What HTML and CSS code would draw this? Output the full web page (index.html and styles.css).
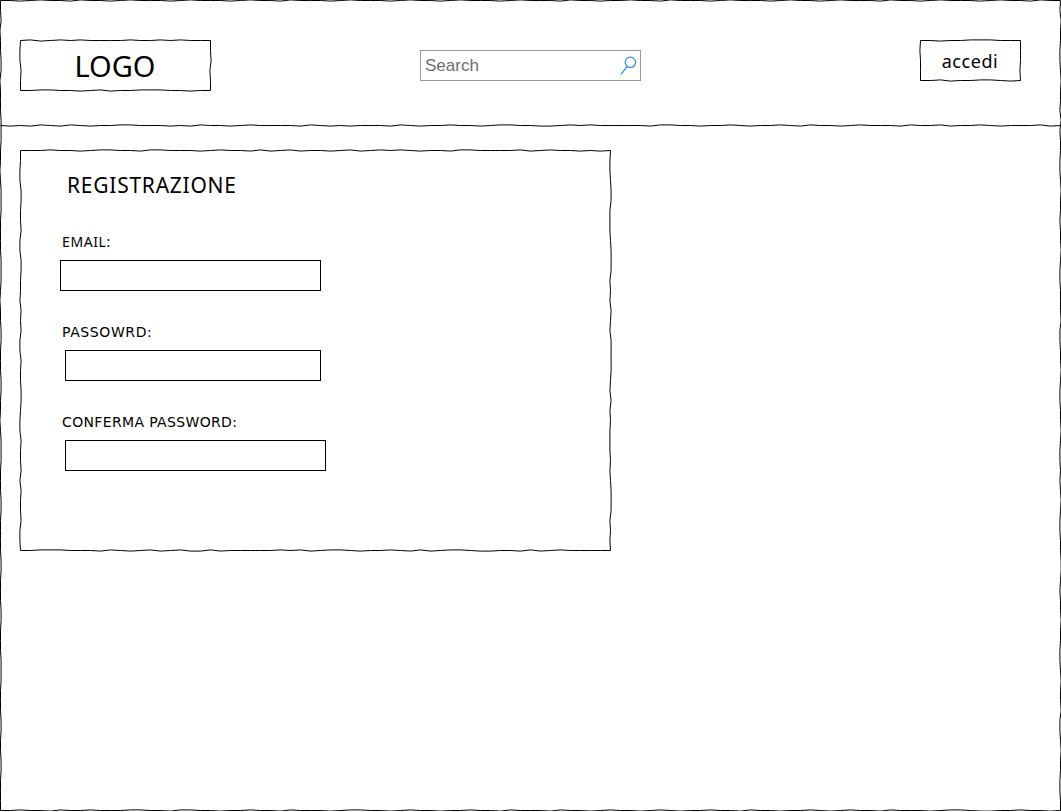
FILE: index.html
```html
<!DOCTYPE html>
<html lang="it">
<head>
<meta charset="utf-8">
<title>Registrazione</title>
<link rel="stylesheet" href="styles.css">
</head>
<body>
<div class="page sketch" data-top="2232122312232122232122232122312223212223212232122232122231223221223122232122232122321222312232122232122312223212" data-right="213221123221312211232212232112223112232112232112123211223321223221123223112322112131" data-bottom="2212231221222112231122322122312223211223212232212231222312232122321232212231223221232122312223211233221223" data-left="2231223312223332212333222233321223322233221233322233222233222332223332223322332">
  <header class="header">
    <div class="logo sketch" data-top="2132121222212212122" data-right="22312" data-bottom="2211223213221112232" data-left="21132"><span>LOGO</span></div>
    <div class="search">
      <input class="search-input" type="text" placeholder="Search" aria-label="Search">
      <svg class="search-icon" width="16" height="19" viewBox="0 0 16 19"><circle cx="10.4" cy="6.3" r="5.2"/><path d="M7.2 10.4 1 18.3"/></svg>
    </div>
    <button class="login sketch" type="button" data-top="2232211122" data-right="2221" data-bottom="2213221123" data-left="2122"><span>accedi</span></button>
  </header>
  <div class="divider sketch" data-top="2323123123221122232312232122223123232223123221223211223321212222231122322123221231223212223122132212322213"></div>
  <main>
    <form class="panel sketch" data-top="22212232112231122232122313213223213212123223112222132122323" data-right="2112331112333121321333321312111212333121" data-bottom="2211122231232132133132222212132112322123132112332231321222" data-left="2211332231133221323113223321132231322311">
      <h1 class="title">REGISTRAZIONE</h1>
      <div class="field"><label class="label label-email" for="email">EMAIL:</label><input class="box" id="email" type="email"></div>
      <div class="field"><label class="label label-password" for="password">PASSOWRD:</label><input class="box box-short" id="password" type="password"></div>
      <div class="field"><label class="label" for="confirm">CONFERMA PASSWORD:</label><input class="box box-indent" id="confirm" type="password"></div>
    </form>
  </main>
</div>
<script src="sketch.js"></script>
</body>
</html>
```
FILE: styles.css
```css
* { box-sizing: border-box; }
body { margin: 0; background: #fff; color: #000; font-family: "Noto Sans", "DejaVu Sans", sans-serif; overflow: hidden; }
.page { width: 1061px; height: 811px; }
.sketch { position: relative; }
.outline { position: absolute; inset: 0; width: 100%; height: 100%; overflow: visible; pointer-events: none; }
.outline path { fill: none; stroke: #000; stroke-width: 1; }
.header { display: flex; align-items: flex-start; justify-content: space-between; height: 125px; padding: 40px 40px 0 20px; }
.logo { display: flex; align-items: center; justify-content: center; width: 191px; height: 51px; padding-right: 1px; font-size: 29px; line-height: 1; }
.search { display: flex; align-items: center; width: 221px; height: 31px; margin: 10px 0 0 -70px; padding: 0 4px; border: 1px solid #999; }
.search-input { flex: 1; min-width: 0; padding: 0; border: 0; outline: 0; background: none; font: 17px "Liberation Sans", sans-serif; }
.search-input::placeholder { color: #6d6d6d; opacity: 1; }
.search-icon { overflow: visible; fill: none; stroke: #1890ff; stroke-width: 1.2; }
.login { display: flex; align-items: center; justify-content: center; width: 101px; height: 41px; padding: 0 1px 0 0; border: 0; background: none; color: #000; font: 18px/1 "Noto Sans", sans-serif; letter-spacing: 0.55px; }
.divider { height: 1px; margin-bottom: 24px; }
.panel { width: 591px; height: 401px; margin-left: 20px; padding: 20px 0 0 40px; }
.title { margin: 0 0 33px 7px; font: 400 21px/30px "Noto Sans", sans-serif; letter-spacing: 0.75px; }
.field { display: flex; flex-direction: column; align-items: flex-start; height: 90px; }
.label { height: 27px; padding-left: 2px; font: 14px/18px "DejaVu Sans", sans-serif; letter-spacing: 0.35px; }
.label-email { font-family: "Noto Sans", sans-serif; letter-spacing: 0.6px; }
.label-password { letter-spacing: 0.6px; }
.box { width: 261px; height: 31px; padding: 0 6px; border: 1px solid #000; border-radius: 0; outline: 0; background: #fff; }
.box-short { width: 256px; margin-left: 5px; }
.box-indent { margin-left: 5px; }
```
FILE: sketch.js
```js
// Draws hand-sketched edges; each digit is an offset at a 10px step, 2 being centred.
document.querySelectorAll('.sketch').forEach(el => {
  const w = el.offsetWidth, h = el.offsetHeight;
  const edge = (digits, length, fixed, vertical) => {
    const pts = vertical ? [[fixed, 0.5]] : [[0.5, fixed]];
    for (let i = 1; i * 10 < length - 4; i++) {
      const d = (Number(digits[i] || 2) - 2) * 0.6;
      pts.push(vertical ? [fixed + d, i * 10 + 0.5] : [i * 10 + 0.5, fixed + d]);
    }
    pts.push(vertical ? [fixed, length - 0.5] : [length - 0.5, fixed]);
    return 'M' + pts.map(p => p.join(' ')).join('L');
  };
  const { top, right, bottom, left } = el.dataset;
  let d = edge(top, w, 0.5, false);
  if (bottom) d += edge(right, h, w - 0.5, true) + edge(bottom, w, h - 0.5, false) + edge(left, h, 0.5, true);
  el.insertAdjacentHTML('beforeend', '<svg class="outline" aria-hidden="true"><path d="' + d + '"/></svg>');
});
```
